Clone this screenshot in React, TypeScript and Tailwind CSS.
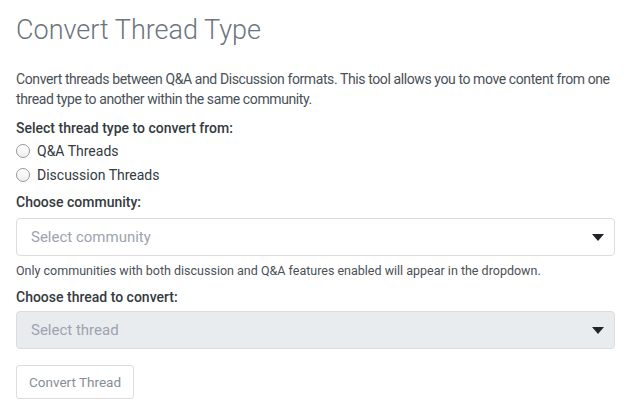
import React from 'react';

const font = { fontFamily: 'Roboto, "Liberation Sans", sans-serif' };

const Caret: React.FC = () => (
  <svg width="12" height="7" viewBox="0 0 12 7" className="shrink-0">
    <path d="M0 0h12L6 7z" fill="#212529" />
  </svg>
);

const Radio: React.FC<{ label: string }> = ({ label }) => (
  <label className="flex items-center gap-[7px] h-6 text-[14px] text-[#343a40]">
    <span className="w-[14px] h-[14px] rounded-full border-[1.5px] border-[#9a9a9a] bg-gradient-to-b from-white to-[#eeeeee]" />
    {label}
  </label>
);

const App: React.FC = () => {
  return (
    <div className="bg-white w-[636px] h-[418px] px-4 pt-[12px]" style={font}>
      <h1 className="text-[27px] font-light text-[#6c757d] leading-[36px]">Convert Thread Type</h1>

      <p className="mt-[21px] text-[14px] tracking-[-0.4px] leading-[20px] text-[#495057]">
        Convert threads between Q&amp;A and Discussion formats. This tool allows you to move content from one thread type to
        another within the same community.
      </p>

      <p className="mt-[9px] text-[14px] font-medium text-[#343a40] leading-[20px]">Select thread type to convert from:</p>
      <div className="mt-[1px] flex flex-col">
        <Radio label="Q&A Threads" />
        <Radio label="Discussion Threads" />
      </div>

      <p className="mt-[5px] text-[14px] font-medium text-[#343a40] leading-[20px]">Choose community:</p>
      <div className="mt-[6px] w-[599px] h-[38px] border border-[#dcdcdc] rounded-[4px] flex items-center justify-between pl-[14px] pr-[10px]">
        <span className="text-[15px] text-[#9ca3af]">Select community</span>
        <Caret />
      </div>
      <p className="mt-[6px] text-[12.5px] leading-[18px] text-[#495057]">
        Only communities with both discussion and Q&amp;A features enabled will appear in the dropdown.
      </p>

      <p className="mt-[7px] text-[14px] font-medium text-[#343a40] leading-[20px]">Choose thread to convert:</p>
      <div className="mt-[4px] w-[599px] h-[38px] border border-[#dcdcdc] bg-[#e9ecef] rounded-[4px] flex items-center justify-between pl-[14px] pr-[10px]">
        <span className="text-[15px] text-[#9ca3af]">Select thread</span>
        <Caret />
      </div>

      <button className="mt-[16px] h-[34px] px-[12px] border border-[#dcdcdc] rounded-[3px] text-[13.5px] text-[#868e96] bg-white">
        Convert Thread
      </button>
    </div>
  );
};

export default App;
